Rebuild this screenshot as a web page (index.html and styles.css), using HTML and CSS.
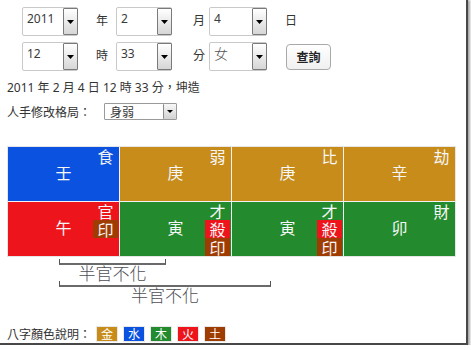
FILE: index.html
```html
<!DOCTYPE html>
<html lang="zh-Hant">
<head>
<meta charset="utf-8">
<title>八字</title>
<link rel="stylesheet" href="styles.css">
</head>
<body>
<div class="frame">
  <div class="form">
    <div class="sel w56"><span class="val">2011</span><span class="arrow"><svg width="7" height="4" viewBox="0 0 7 4"><path d="M0 0h7L3.5 4z"/></svg></span></div>
    <span class="lab">年</span>
    <div class="sel w56"><span class="val">2</span><span class="arrow"><svg width="7" height="4" viewBox="0 0 7 4"><path d="M0 0h7L3.5 4z"/></svg></span></div>
    <span class="lab lab2">月</span>
    <div class="sel w58"><span class="val">4</span><span class="arrow"><svg width="7" height="4" viewBox="0 0 7 4"><path d="M0 0h7L3.5 4z"/></svg></span></div>
    <span class="lab lab3">日</span>

    <div class="sel w56"><span class="val">12</span><span class="arrow"><svg width="7" height="4" viewBox="0 0 7 4"><path d="M0 0h7L3.5 4z"/></svg></span></div>
    <span class="lab">時</span>
    <div class="sel w56"><span class="val">33</span><span class="arrow"><svg width="7" height="4" viewBox="0 0 7 4"><path d="M0 0h7L3.5 4z"/></svg></span></div>
    <span class="lab lab2">分</span>
    <div class="sel w58"><span class="val val-serif">女</span><span class="arrow"><svg width="7" height="4" viewBox="0 0 7 4"><path d="M0 0h7L3.5 4z"/></svg></span></div>
    <div class="btn-cell"><button class="btn">查詢</button></div>
  </div>

  <p class="info">2011 年 2 月 4 日 12 時 33 分，坤造</p>

  <div class="pattern">
    <span>人手修改格局：</span>
    <div class="sel small"><span class="val">身弱</span><span class="arrow"><svg width="6" height="3" viewBox="0 0 6 3"><path d="M0 0h6L3 3z"/></svg></span></div>
  </div>

  <div class="chart">
    <div class="cell water"><span class="main">壬</span><div class="corner"><span>食</span></div></div>
    <div class="cell metal"><span class="main">庚</span><div class="corner"><span>弱</span></div></div>
    <div class="cell metal"><span class="main">庚</span><div class="corner"><span>比</span></div></div>
    <div class="cell metal"><span class="main">辛</span><div class="corner"><span>劫</span></div></div>
    <div class="cell fire"><span class="main">午</span><div class="corner"><span>官</span><span class="earth">印</span></div></div>
    <div class="cell wood"><span class="main">寅</span><div class="corner"><span>才</span><span class="fire">殺</span><span class="earth">印</span></div></div>
    <div class="cell wood"><span class="main">寅</span><div class="corner"><span>才</span><span class="fire">殺</span><span class="earth">印</span></div></div>
    <div class="cell wood"><span class="main">卯</span><div class="corner"><span>財</span></div></div>
  </div>

  <div class="bracket b1"></div>
  <div class="note b1">半官不化</div>
  <div class="bracket b2"></div>
  <div class="note b2">半官不化</div>

  <div class="legend">
    <span class="legend-label">八字顏色說明：</span>
    <span class="badge metal">金</span>
    <span class="badge water">水</span>
    <span class="badge wood">木</span>
    <span class="badge fire">火</span>
    <span class="badge earth">土</span>
  </div>
</div>
</body>
</html>
```

FILE: styles.css
```css
html, body {
  margin: 0;
  padding: 0;
  background: #fff;
}

body {
  font-family: "Noto Sans", "Noto Sans CJK TC", sans-serif;
  color: #333;
  font-size: 12px;
}

.frame {
  width: 468px;
  height: 345px;
  box-sizing: border-box;
  padding: 7px 0 0 7px;
  border-right: 2px solid #484848;
  border-bottom: 2px solid #484848;
  box-shadow: 1px 1px 2px 1px #a8a8a8;
  overflow: hidden;
}

/* ---------- form ---------- */
.form {
  margin-left: 15px;
  display: grid;
  grid-template-columns: 56px 38px 56px 37px 58px auto;
  grid-template-rows: 29px 29px;
  row-gap: 6px;
  align-items: center;
}

.sel {
  display: flex;
  box-sizing: border-box;
  height: 29px;
  border: 1px solid #c9c9c9;
  border-radius: 2px;
  background: #fff;
  position: relative;
}

.w56 { width: 56px; }
.w58 { width: 58px; }

.val {
  flex: 1;
  padding: 3px 0 0 4px;
  font-size: 12px;
  line-height: 16px;
  color: #3a3a3a;
}

.val-serif {
  font-family: "Noto Sans CJK TC", sans-serif;
  font-weight: 300;
  font-size: 14px;
  color: #555;
  padding-top: 2px;
}

.arrow {
  width: 15px;
  box-sizing: border-box;
  margin: 0 -1px 0 0;
  border: 1px solid #7a7a7a;
  border-radius: 1px;
  background: linear-gradient(#ffffff, #d6d6d6);
  display: flex;
  align-items: center;
  justify-content: center;
}

.arrow svg { display: block; fill: #000; }

.lab {
  padding-left: 18px;
  line-height: 16px;
  padding-bottom: 3px;
  font-family: "Noto Sans CJK TC", sans-serif;
  color: #333;
}
.lab2 { padding-left: 21px; }
.lab3 { padding-left: 18px; }

.btn-cell { padding-left: 19px; }

.btn {
  display: block;
  width: 45px;
  height: 26px;
  padding: 0;
  margin: 1px 0 0 0;
  border: 1px solid #a9a9a9;
  border-radius: 4px;
  background: linear-gradient(#ffffff, #f0f0f0);
  font-family: "Noto Sans CJK TC", sans-serif;
  font-size: 12px;
  font-weight: 700;
  color: #222;
  line-height: 16px;
}

/* ---------- info ---------- */
.info {
  margin: 9px 0 0 0;
  line-height: 16px;
  color: #333;
}

.pattern {
  margin-top: 7px;
  display: flex;
  align-items: center;
  height: 17px;
}

.pattern span:first-child {
  width: 97px;
  line-height: 16px;
  font-family: "Noto Sans CJK TC", sans-serif;
}

.sel.small {
  width: 73px;
  height: 17px;
  border-color: #9a9a9a;
  border-radius: 1px;
}

.sel.small .val {
  padding: 0 0 0 5px;
  line-height: 15px;
  font-family: "Noto Sans CJK TC", sans-serif;
}

.sel.small .arrow {
  width: 13px;
  margin: 0;
  border-width: 0 0 0 1px;
  border-color: #8a8a8a;
  background: linear-gradient(#f8f8f8, #d2d2d2);
}

/* ---------- chart ---------- */
.chart {
  margin-top: 26px;
  width: 449px;
  box-sizing: border-box;
  display: grid;
  grid-template-columns: repeat(4, 111px);
  grid-template-rows: 54px 54px;
  gap: 1px;
  border: 1px solid #e6e6e6;
  background: #f3f3f3;
}

.cell {
  position: relative;
  overflow: hidden;
  display: flex;
  align-items: center;
  justify-content: center;
  padding-bottom: 4px;
  box-sizing: border-box;
  color: #f6f6f6;
  font-family: "Noto Sans CJK TC", sans-serif;
  font-size: 16px;
  line-height: 18px;
}

.corner {
  position: absolute;
  top: 0;
  right: 1px;
  display: flex;
  flex-direction: column;
}

.corner span {
  display: block;
  width: 25px;
  height: 18px;
  line-height: 18px;
  text-align: center;
}

.water { background: #0a52df; }
.metal { background: #c78c19; }
.fire  { background: #ee141c; }
.wood  { background: #238b2d; }
.earth { background: #9f3c02; }

/* ---------- brackets ---------- */
.bracket {
  margin: 2px 0 0 52px;
  box-sizing: border-box;
  height: 6px;
  border: 1px solid #555;
  border-top: 0;
  border-bottom: 2px solid #6a6a6a;
}

.bracket.b2 { margin-top: 0; }

.b1 { width: 107px; }
.b2 { width: 212px; }

.note {
  margin-left: 52px;
  text-align: center;
  font-family: "Noto Sans CJK TC", sans-serif;
  font-weight: 300;
  font-size: 17px;
  line-height: 16px;
  color: #4e4e56;
}

/* ---------- legend ---------- */
.legend {
  margin-top: 23px;
  display: flex;
  align-items: center;
  height: 16px;
}

.legend-label {
  width: 89px;
  font-family: "Noto Sans CJK TC", sans-serif;
  line-height: 16px;
  color: #333;
}

.badge {
  width: 22px;
  height: 16px;
  box-sizing: border-box;
  margin-right: 5px;
  border: 1px solid #e8e8e8;
  color: #fff;
  text-align: center;
  font-family: "Noto Sans CJK TC", sans-serif;
  font-size: 12px;
  line-height: 14px;
}
```
